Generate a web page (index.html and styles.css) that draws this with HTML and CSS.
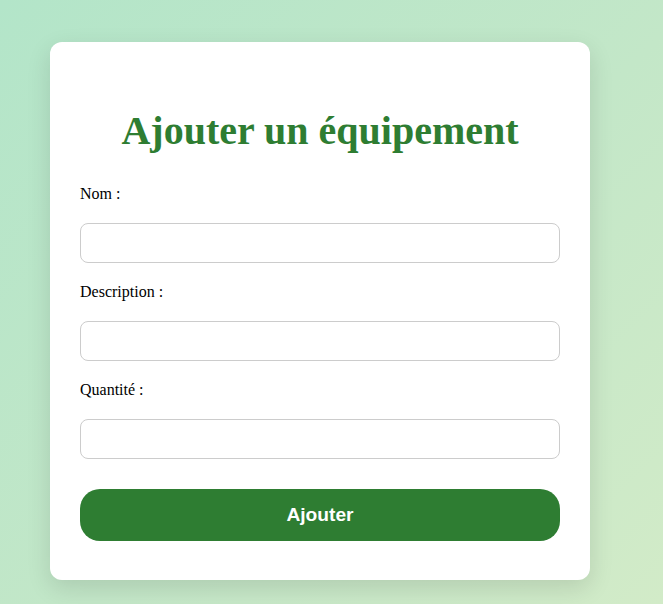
FILE: index.html
```html
<!DOCTYPE html>
<html lang="fr">
<head>
<meta charset="utf-8">
<title>Ajouter un équipement</title>
<link rel="stylesheet" href="styles.css">
</head>
<body>
<div class="card">
  <h1 class="title">Ajouter un équipement</h1>
  <form class="form">
    <label class="label" for="nom">Nom :</label>
    <input class="field" id="nom" type="text">
    <label class="label" for="desc">Description :</label>
    <input class="field" id="desc" type="text">
    <label class="label" for="qte">Quantité :</label>
    <input class="field" id="qte" type="number">
    <button class="btn" type="button">Ajouter</button>
  </form>
</div>
</body>
</html>
```
FILE: styles.css
```css
html, body {
  margin: 0;
  padding: 0;
}
body {
  min-height: 100vh;
  background: linear-gradient(135deg, #b3e5c9 0%, #c3e7c8 55%, #d2ebc8 100%);
  font-family: "Liberation Serif", "Times New Roman", serif;
  padding: 42px 0 0 50px;
  box-sizing: border-box;
}
.card {
  width: 540px;
  box-sizing: border-box;
  background: #fff;
  border-radius: 12px;
  padding: 40px 30px 39px;
  box-shadow: 0 8px 24px rgba(0, 0, 0, 0.12);
}
.title {
  margin: 26px 0 31px;
  font-size: 40px;
  line-height: 46px;
  font-weight: bold;
  color: #2e7d32;
  text-align: center;
}
.form {
  display: flex;
  flex-direction: column;
}
.label {
  display: block;
  font-size: 16px;
  line-height: 18px;
  color: #000;
  margin-bottom: 20px;
}
.field {
  display: block;
  width: 100%;
  height: 40px;
  box-sizing: border-box;
  border: 1px solid #ccc;
  border-radius: 8px;
  margin: 0 0 20px;
  padding: 0 10px;
  font-size: 16px;
  background: #fff;
  -moz-appearance: textfield;
}
.field::-webkit-outer-spin-button,
.field::-webkit-inner-spin-button {
  -webkit-appearance: none;
  margin: 0;
}
.btn {
  margin-top: 10px;
  height: 52px;
  width: 100%;
  border: none;
  border-radius: 20px;
  background: #2e7d32;
  color: #fff;
  font-family: "Liberation Sans", Arial, sans-serif;
  font-weight: bold;
  font-size: 19.2px;
}
```
